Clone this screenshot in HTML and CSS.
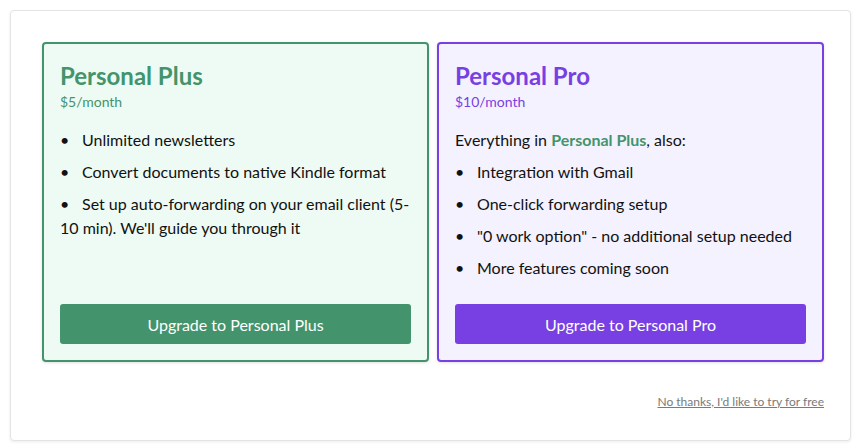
FILE: index.html
```html
<!DOCTYPE html>
<html>
<head>
<meta charset="utf-8">
<link rel="stylesheet" href="styles.css">
</head>
<body>
<div class="panel">
  <div class="plans">
    <div class="plan plan-plus">
      <h2 class="plan-title">Personal Plus</h2>
      <div class="plan-price">$5/month</div>
      <ul class="features">
        <li>Unlimited newsletters</li>
        <li>Convert documents to native Kindle format</li>
        <li>Set up auto-forwarding on your email client (5-10&nbsp;min). We'll guide you through it</li>
      </ul>
      <button class="btn">Upgrade to Personal Plus</button>
    </div>
    <div class="plan plan-pro">
      <h2 class="plan-title">Personal Pro</h2>
      <div class="plan-price">$10/month</div>
      <p class="intro">Everything in <strong>Personal Plus</strong>, also:</p>
      <ul class="features">
        <li>Integration with Gmail</li>
        <li>One-click forwarding setup</li>
        <li>"0 work option" - no additional setup needed</li>
        <li>More features coming soon</li>
      </ul>
      <button class="btn">Upgrade to Personal Pro</button>
    </div>
  </div>
  <div class="footer">
    <a class="skip" href="#">No thanks, I'd like to try for free</a>
  </div>
</div>
</body>
</html>
```
FILE: styles.css
```css
html, body {
  margin: 0;
  padding: 0;
  background: #ffffff;
}
body {
  padding: 10px;
  font-family: Lato, "Open Sans", sans-serif;
  color: #111;
}
.panel {
  width: 841px;
  box-sizing: border-box;
  border: 1px solid #e4e4e4;
  border-radius: 4px;
  box-shadow: 0 1px 3px rgba(0,0,0,0.08);
  background: #fff;
  padding: 31px 26px 31px 31px;
}
.plans {
  display: grid;
  grid-template-columns: 387px 387px;
  gap: 8px;
}
.plan {
  display: flex;
  flex-direction: column;
  border: 2px solid;
  border-radius: 4px;
  padding: 16px;
  box-shadow: 0 1px 3px rgba(0,0,0,0.12);
}
.plan-plus {
  border-color: #43946c;
  background: #eefbf4;
  color: #43946c;
}
.plan-pro {
  border-color: #7840e3;
  background: #f4f2fe;
  color: #7840e3;
}
.plan-title {
  margin: 0;
  font-size: 24px;
  line-height: 32px;
  font-weight: 700;
}
.plan-price {
  font-size: 14px;
  line-height: 20px;
}
.intro {
  margin: 16px 0 0;
  font-size: 16px;
  line-height: 24px;
  color: #111;
}
.intro strong {
  color: #43946c;
  font-weight: 700;
}
.features {
  list-style: none;
  margin: 16px 0 0;
  padding: 0;
  color: #111;
  font-size: 16px;
  line-height: 24px;
}
.intro + .features {
  margin-top: 8px;
}
.features li {
  margin-bottom: 8px;
}
.features li:last-child {
  margin-bottom: 0;
}
.features li::before {
  content: "\2022";
  display: inline-block;
  width: 22px;
  font-size: 16px;
}
.btn {
  margin-top: auto;
  height: 40px;
  border: none;
  border-radius: 3px;
  color: #fff;
  font-family: Lato, "Open Sans", sans-serif;
  font-size: 16px;
  cursor: pointer;
}
.plans .plan .btn {
  margin-top: auto;
}
.plan-pro .features {
  margin-bottom: 24px;
}
.plan-plus .btn {
  background: #43946c;
}
.plan-pro .btn {
  background: #7840e3;
}
.footer {
  display: flex;
  justify-content: flex-end;
  margin-top: 33px;
  line-height: 14px;
}
.skip {
  font-size: 12px;
  color: #7a7a7a;
  text-decoration: underline;
}
```
